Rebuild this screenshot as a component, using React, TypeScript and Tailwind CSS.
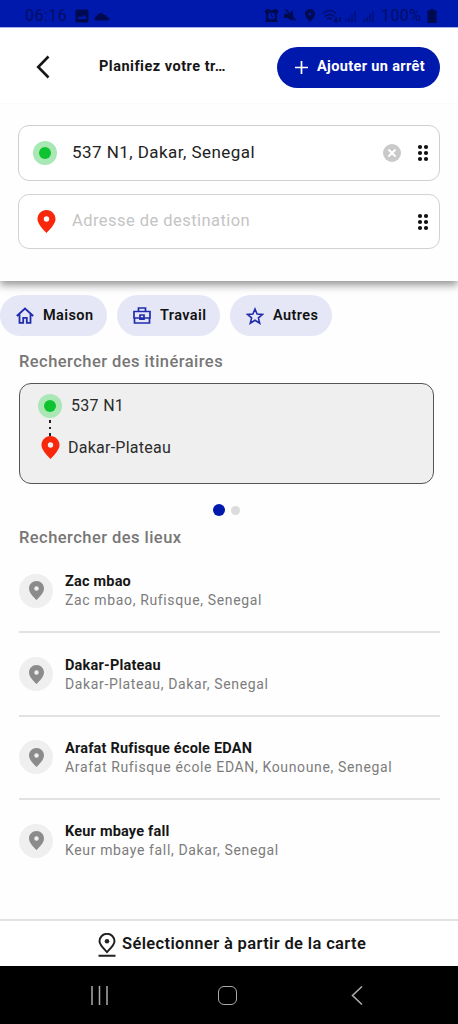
import type { ReactNode } from "react";

const places = [
    { name: "Zac mbao", address: "Zac mbao, Rufisque, Senegal" },
    { name: "Dakar-Plateau", address: "Dakar-Plateau, Dakar, Senegal" },
    { name: "Arafat Rufisque école EDAN", address: "Arafat Rufisque école EDAN, Kounoune, Senegal" },
    { name: "Keur mbaye fall", address: "Keur mbaye fall, Dakar, Senegal" },
];

function Pin({ className }: { className: string }) {
    return (
        <svg viewBox="0 0 18 23" className={className} fill="currentColor">
            <path fillRule="evenodd" d="M9 0C4 0 0 4 0 9c0 5 5.5 10.2 9 14 3.5-3.8 9-9 9-14 0-5-4-9-9-9Zm0 6.300a2.700 2.700 0 1 1 0 5.400 2.700 2.700 0 0 1 0-5.400Z" />
        </svg>
    );
}

function OriginDot() {
    return (
        <span className="flex size-6 shrink-0 items-center justify-center rounded-full bg-[#a9e8b5]">
            <span className="size-3 rounded-full bg-[#0ec32f]" />
        </span>
    );
}

function DragHandle() {
    return (
        <svg viewBox="0 0 12 18" className="h-[18px] w-3 shrink-0" fill="#111">
            {[3, 9, 15].map((y) => (
                <g key={y}>
                    <circle cx="3" cy={y} r="2.1" />
                    <circle cx="9" cy={y} r="2.1" />
                </g>
            ))}
        </svg>
    );
}

function Chip({ label, className, children }: { label: string; className: string; children: ReactNode }) {
    return (
        <button className={`flex h-[41px] items-center rounded-full bg-[#e5e7f7] text-[14.5px] font-semibold tracking-[0.4px] text-[#111] ${className}`}>
            {children}
            {label}
        </button>
    );
}

function StatusBar() {
    return (
        <div className="relative z-10 flex h-7 shrink-0 items-center border-b border-[#a3b2ee] bg-[#0019ad] pt-1 pl-[25px] text-[#000d66]">
            <span className="w-[50px] text-[16px] tracking-[0.5px]">06:16</span>
            <svg viewBox="0 0 14 14" className="size-3.5 shrink-0" fill="#000a50">
                <path fillRule="evenodd" d="M2 .5h10A1.5 1.5 0 0 1 13.5 2v10a1.5 1.5 0 0 1-1.5 1.5H2A1.5 1.5 0 0 1 .5 12V2A1.5 1.5 0 0 1 2 .5Zm0 9.500h10L9 5.500 6.500 8.500 5 7Z" />
            </svg>
            <svg viewBox="0 0 16 10" className="ml-[5px] h-[10px] w-4 shrink-0" fill="#000a50">
                <path d="M2 9.500C0 9.500 0 6 2.500 5.500 3.500 2 8 .5 10 4c2-.3 3 1 3 2 3 .3 3 3.500 1 3.500Z" />
            </svg>
            <svg viewBox="0 0 13 13" className="ml-[155px] size-[13px] shrink-0" fill="#000a50">
                <path fillRule="evenodd" d="M0 1.500 2 0h2.500v1h4V0H11l2 1.500V4l-1 1v6l1 2H0l1-2V5L0 4Zm6.500 2a3.500 3.500 0 1 0 0 7 3.500 3.500 0 0 0 0-7Zm-.5 1h1v2l1.500 1-.6.8L6 7.200Z" />
            </svg>
            <svg viewBox="0 0 13 13" className="ml-[6px] size-[13px] shrink-0" fill="#000a50">
                <path d="M0 4.500h3l1 1L9 1v6l3 4-1 1-3-2v2L4 9H0ZM1 1l1-1 10 11-1 1Z" />
            </svg>
            <Pin className="ml-2 h-[13px] w-[10px] shrink-0 text-[#000a50]" />
            <svg viewBox="0 0 20 14" className="ml-[7px] h-[14px] w-5 shrink-0" fill="none" stroke="#000d66" strokeWidth="1.6">
                <path d="M1 4.500c4-4 9-4 13 0M3 7.500c3-2.700 6-2.700 9 0M5 10.200c1.500-1.500 3.500-1.500 5 0M14 8v5m-2-2 2 2 2-2M18 13V8" />
            </svg>
            <svg viewBox="0 0 30 13" className="ml-[3px] h-[13px] w-[30px] shrink-0" fill="none" stroke="#000f78" strokeWidth="1.5">
                <path d="M1 13v-3M4 13V8M7 13V5M10 13V2M19 13v-3M22 13V8M25 13V5M28 13V2" />
            </svg>
            <span className="ml-1.5 w-[43px] text-[16px] tracking-[0.4px]">100%</span>
            <svg viewBox="0 0 10 14" className="ml-[3px] h-[14px] w-[10px] shrink-0" fill="#000a50">
                <path d="M3 0h4v1.500h2.500V14h-9V1.500H3Z" />
            </svg>
        </div>
    );
}

export default function App() {
    return (
        <div className="flex h-[1024px] w-[458px] flex-col overflow-hidden bg-[#fefefe] font-[Roboto,sans-serif]">
            <StatusBar />

            {/* Header */}
            <header className="relative z-10 flex h-[76px] shrink-0 items-center border-b border-[#fafafa] bg-white pt-[3px] pr-[18px] pl-9">
                <svg viewBox="0 0 14 24" className="h-6 w-3.5" fill="none" stroke="#161616" strokeWidth="2.6">
                    <path d="M12.500 1.500 2.200 12l10.300 10.500" />
                </svg>
                <h1 className="ml-[49px] w-[178px] text-[14.5px] font-bold tracking-[0.5px] whitespace-nowrap text-[#161616]">Planifiez votre tr…</h1>
                <button className="flex h-[41px] w-[163px] items-center rounded-full bg-[#0019ad] pl-[18px] text-[14.5px] font-bold tracking-[0.35px] whitespace-nowrap text-white">
                    <svg viewBox="0 0 13 13" className="mr-[9px] size-[13px]" fill="none" stroke="currentColor" strokeWidth="1.7">
                        <path d="M6.500 0v13M0 6.500h13" />
                    </svg>
                    Ajouter un arrêt
                </button>
            </header>

            {/* Addresses */}
            <section className="flex h-[177px] shrink-0 flex-col gap-[13px] bg-[#fefefe] px-[18px] pt-[21px] shadow-[0_4px_8px_0_rgba(0,0,0,0.42)]">
                <div className="flex h-[56px] items-center rounded-[11px] border border-[#cfcfcf] bg-white pr-2.5 pl-3.5">
                    <OriginDot />
                    <span className="ml-[15px] flex-1 text-[17px] tracking-[0.45px] text-[#222]">537 N1, Dakar, Senegal</span>
                    <svg viewBox="0 0 18 18" className="mr-4 size-[18px]">
                        <circle cx="9" cy="9" r="9" fill="#c9c9c9" />
                        <path d="m5.500 5.500 7 7m0-7-7 7" stroke="#fff" strokeWidth="2" />
                    </svg>
                    <DragHandle />
                </div>
                <div className="flex h-[55px] items-center rounded-[11px] border border-[#d2d2d2] bg-white pr-2.5 pl-[18px]">
                    <Pin className="h-[23px] w-[19px] text-[#f8280d]" />
                    <span className="ml-4 flex-1 text-[16.5px] tracking-[0.45px] text-[#c4c4c4]">Adresse de destination</span>
                    <DragHandle />
                </div>
            </section>

            {/* Shortcuts */}
            <div className="mt-3.5 flex shrink-0 gap-2.5">
                <Chip label="Maison" className="w-[107px] pl-[16px]">
                    <svg viewBox="0 0 18 17" className="mr-[9px] h-[17px] w-[18px]" fill="none" stroke="#202cac" strokeWidth="1.8">
                        <path d="M.8 9 9 1.500 17.200 9M3.500 7v8.800h3.700v-5h3.600v5h3.700V7" />
                    </svg>
                </Chip>
                <Chip label="Travail" className="w-[103px] pl-4">
                    <svg viewBox="0 0 18 17" className="mr-[9px] h-[17px] w-[18px]" fill="none" stroke="#202cac" strokeWidth="1.7">
                        <path d="M5.500 4V1h7v3M1 4.500h16v6.500H1ZM1.500 11v5h15v-5M7 8h4v4.200H7Z" />
                    </svg>
                </Chip>
                <Chip label="Autres" className="w-[102px] pl-[16px]">
                    <svg viewBox="0 0 18 18" className="mr-[9px] size-[18px]" fill="none" stroke="#202cac" strokeWidth="1.6">
                        <path d="m9 2 2.100 5 5.400.4-4.100 3.500 1.300 5.300L9 13.300l-4.700 2.900 1.300-5.300-4.100-3.500L6.900 7Z" />
                    </svg>
                </Chip>
            </div>

            {/* Itineraries */}
            <h2 className="mt-3.5 ml-[19px] h-6 shrink-0 text-[16.5px] leading-6 font-medium tracking-[0.45px] text-[#777]">Rechercher des itinéraires</h2>
            <div className="mt-[9px] ml-[19px] h-[101px] w-[415px] shrink-0 rounded-xl border-[1.5px] border-[#555] bg-[#efefef] pt-2.5 pl-[18px] text-[16px] text-[#2b2b2b]">
                <div className="flex h-6 items-center gap-[9px]">
                    <OriginDot />
                    <span className="tracking-[0.3px]">537 N1</span>
                </div>
                <div className="ml-[11px] flex h-[18px] flex-col gap-1 pt-0.5">
                    <span className="h-[3px] w-[1.5px] bg-[#222]" />
                    <span className="h-[3px] w-[1.5px] bg-[#222]" />
                    <span className="h-[3px] w-[1.5px] bg-[#222]" />
                </div>
                <div className="ml-[3px] flex h-[23px] items-center gap-2">
                    <Pin className="h-[23px] w-[19px] text-[#f8280d]" />
                    <span className="tracking-[0.25px]">Dakar-Plateau</span>
                </div>
            </div>
            <div className="mt-5 flex h-3 shrink-0 items-center gap-1.5 pl-[213px]">
                <span className="size-3 rounded-full bg-[#0019ad]" />
                <span className="size-[9px] rounded-full bg-[#dcdcdc]" />
            </div>

            {/* Places */}
            <h2 className="mt-2.5 ml-[19px] h-6 shrink-0 text-[16.5px] leading-6 font-medium tracking-[0.45px] text-[#777]">Rechercher des lieux</h2>
            <ul className="flex-1 pr-[18px] pl-[19px]">
                {places.map((p) => (
                    <li key={p.name} className="flex h-[83.4px] items-center border-b-2 border-[#e2e2e2] last:border-transparent">
                        <span className="flex size-[34px] shrink-0 items-center justify-center rounded-full bg-[#efefef]">
                            <Pin className="h-[21px] w-[15px] text-[#8b8b8b]" />
                        </span>
                        <div className="ml-3 pt-px whitespace-nowrap">
                            <p className="text-[14.5px] leading-[19px] font-bold tracking-[0.2px] text-[#161616]">{p.name}</p>
                            <p className="text-[14px] leading-[19px] tracking-[0.64px] text-[#7c7c7c]">{p.address}</p>
                        </div>
                    </li>
                ))}
            </ul>

            <button className="flex h-[47px] shrink-0 items-center border-t-2 border-[#e2e2e2] bg-white pt-0.5 pl-[98px] text-[16.5px] font-semibold tracking-[0.36px] whitespace-nowrap text-[#161616]">
                <svg viewBox="0 0 18 24" className="mr-1.5 h-6 w-[18px]" fill="none" stroke="#222" strokeWidth="2">
                    <path d="M9 19C5.500 15.500 1.500 12 1.500 8.300a7.500 7.500 0 0 1 15 0C16.500 12 12.500 15.500 9 19ZM.5 22.800h17" />
                    <circle cx="9" cy="8.3" r="2.3" fill="#222" stroke="none" />
                </svg>
                Sélectionner à partir de la carte
            </button>

            {/* System navigation */}
            <nav className="flex h-[58px] shrink-0 items-center bg-black pl-[91px]">
                <svg viewBox="0 0 17 19" className="h-[19px] w-[17px]" fill="none" stroke="#aaa" strokeWidth="1.5">
                    <path d="M1 0v19M8.500 0v19M16 0v19" />
                </svg>
                <span className="ml-[110px] size-[19px] rounded-[6px] border-[1.5px] border-[#aaa]" />
                <svg viewBox="0 0 12 19" className="ml-[114px] h-[19px] w-3" fill="none" stroke="#aaa" strokeWidth="1.6">
                    <path d="M11 .5 1.500 9.500l9.500 9" />
                </svg>
            </nav>
        </div>
    );
}
